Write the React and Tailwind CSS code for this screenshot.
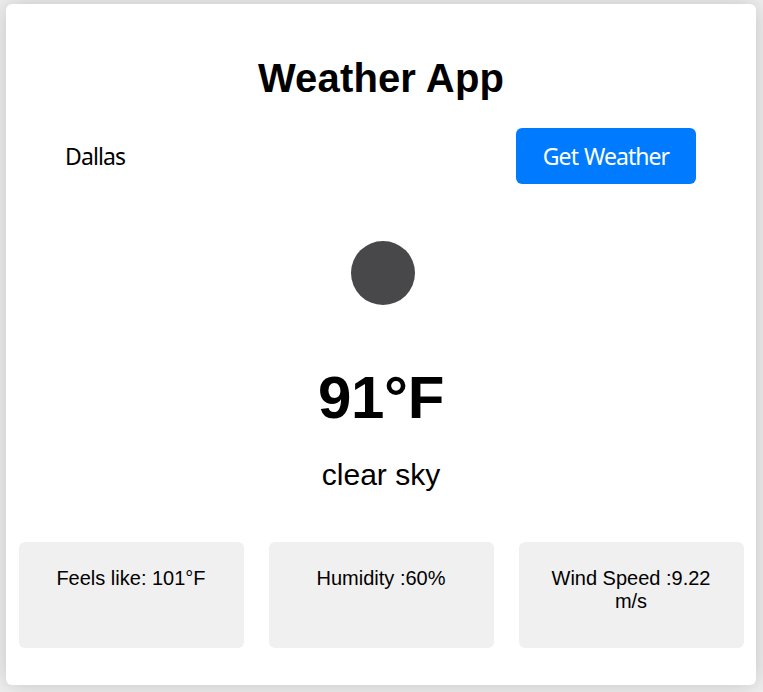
const stats = ["Feels like: 101°F", "Humidity :60%", "Wind Speed :9.22 m/s"];

export default function App() {
  return (
    <div className="h-[692px] w-[763px] overflow-hidden bg-[#f0f0f0] pt-[4px] pl-[6px] font-['Liberation_Sans',sans-serif] text-black">
      <main className="flex h-[681px] w-[750px] flex-col items-center rounded-[6px] bg-white shadow-[0_0_25px_rgba(0,0,0,0.2)]">
        <h1 className="mt-[50px] h-[48px] text-[40px] leading-[48px] font-bold tracking-[0.15px] whitespace-nowrap">Weather App</h1>
        <form className="mt-[26px] flex h-[56px] w-[630px] items-center justify-between font-['Noto_Sans',sans-serif] text-[23px]">
          <span className="-ml-px tracking-[-0.9px]">Dallas</span>
          <button type="button" className="h-[56px] w-[180px] rounded-[6px] bg-[#007bff] tracking-[-0.95px] text-white"><span className="[word-spacing:1px]">Get Weather</span></button>
        </form>
        <div className="mt-[57px] ml-[3px] size-[64px] rounded-full bg-[#48484a] blur-[0.6px]" />
        <p className="mt-[58px] h-[72px] text-[60px] leading-[70px] font-bold tracking-[-0.3px]">91°F</p>
        <p className="mt-[22px] h-[36px] text-[30px] leading-[36px]">clear sky</p>
        <section className="mt-[49px] flex gap-[25px]">
          {stats.map((s) => (
            <div key={s} className="h-[106px] w-[225px] rounded-[6px] bg-[#f0f0f0] px-[25px] pt-[25px] text-center text-[20px] leading-[23px]">{s}</div>
          ))}
        </section>
      </main>
    </div>
  );
}
